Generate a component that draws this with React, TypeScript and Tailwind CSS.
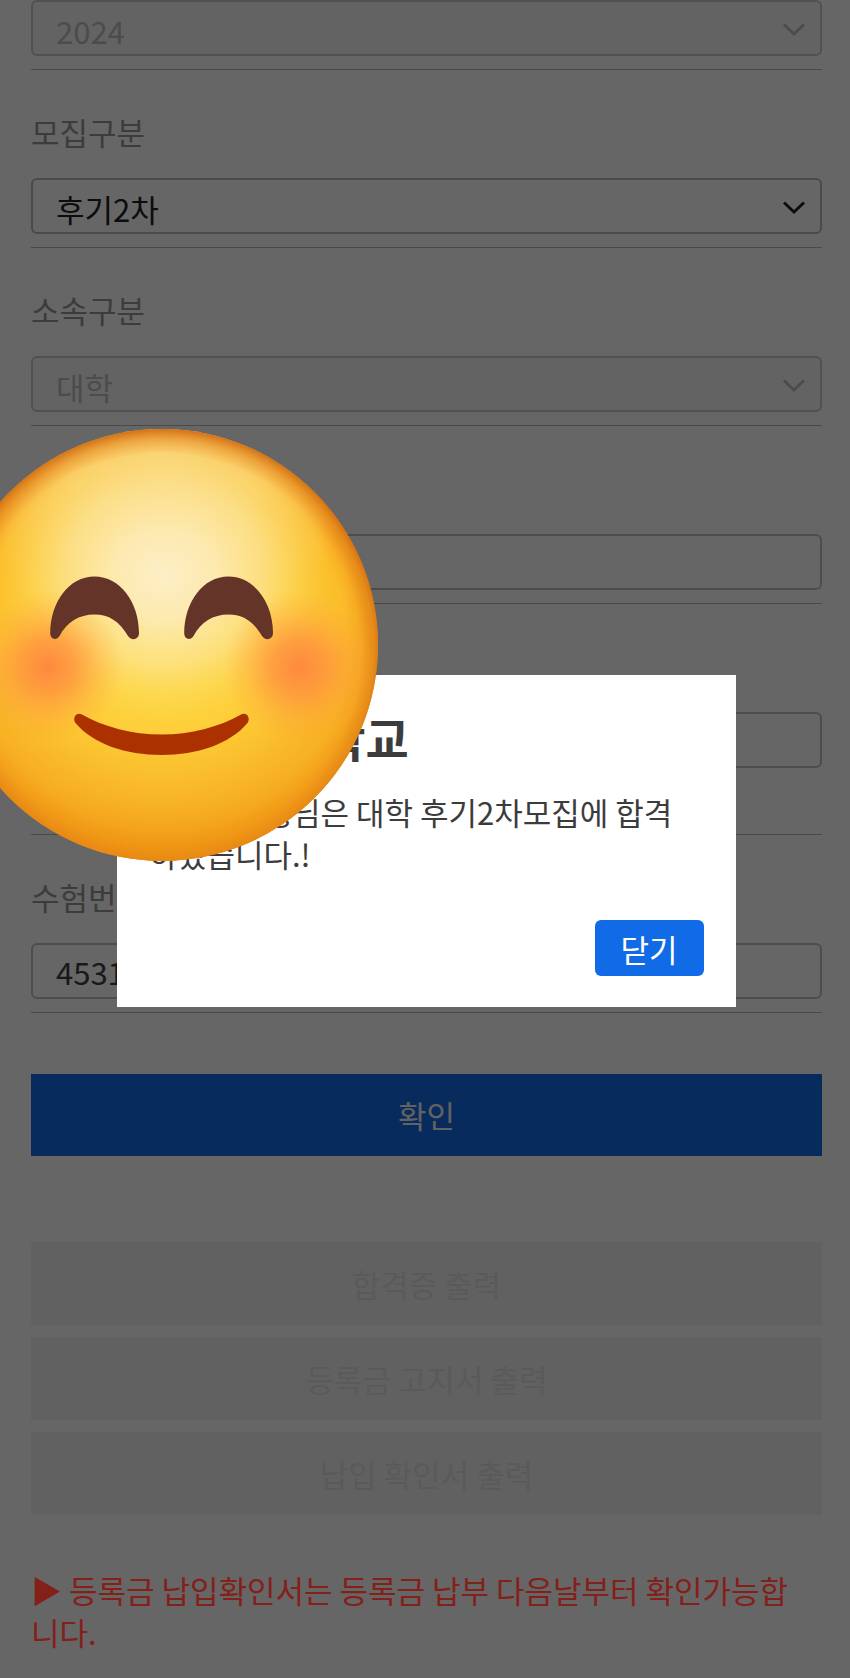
import type { ReactNode } from "react";

const controlBase =
  "block h-14 w-full rounded-md border-2 px-[23px] text-[31px] leading-[44px]";

function Field({
  id,
  label,
  hint = false,
  children,
}: {
  id: string;
  label?: string;
  hint?: boolean;
  children: ReactNode;
}) {
  return (
    <div className="border-b border-[#b8b8b8] pb-[13px]">
      {label && (
        <label
          htmlFor={id}
          className="mt-10 mb-6 block leading-[44px] text-[#969696]"
        >
          {label}
        </label>
      )}
      {children}
      {hint && <div className="h-[53px]" />}
    </div>
  );
}

function SelectBox({
  id,
  value,
  disabled = false,
  ariaLabel,
}: {
  id: string;
  value: string;
  disabled?: boolean;
  ariaLabel?: string;
}) {
  return (
    <div className="relative">
      <select
        id={id}
        aria-label={ariaLabel}
        disabled={disabled}
        defaultValue={value}
        className={`${controlBase} appearance-none pt-1.5 ${
          disabled
            ? "border-[#cacaca] bg-[#f8f8f8] text-[#bdbdbd] opacity-100"
            : "border-[#b8b8b8] bg-white text-[#222222]"
        }`}
      >
        <option>{value}</option>
      </select>
      <svg
        viewBox="0 0 24 14"
        aria-hidden="true"
        className={`pointer-events-none absolute top-[23px] right-4 h-[14px] w-6 ${
          disabled ? "text-[#bdbdbd]" : "text-[#222222]"
        }`}
        fill="none"
        stroke="currentColor"
        strokeWidth="3"
      >
        <path d="M2 1.5 L12 11 L22 1.5" />
      </svg>
    </div>
  );
}

function TextBox({ id, value = "" }: { id: string; value?: string }) {
  return (
    <input
      id={id}
      type="text"
      defaultValue={value}
      className={`${controlBase} border-[#c0c0c0] bg-white text-[#404040]`}
    />
  );
}

function SmilingFace() {
  return (
    <svg
      viewBox="0 0 432 432"
      aria-hidden="true"
      className="pointer-events-none absolute -top-[246px] -left-[171px] size-[432px]"
    >
      <defs>
        <radialGradient id="face" gradientUnits="userSpaceOnUse" cx="216" cy="216" r="216">
          <stop offset="0" stopColor="#fdd946" />
          <stop offset="0.6" stopColor="#fdcb35" />
          <stop offset="0.86" stopColor="#fbbd2a" />
          <stop offset="0.93" stopColor="#f6a823" />
          <stop offset="0.98" stopColor="#e58c16" />
          <stop offset="1" stopColor="#d9750f" />
        </radialGradient>
        <radialGradient id="shade" gradientUnits="userSpaceOnUse" cx="216" cy="110" r="326">
          <stop offset="0.58" stopColor="#f29a14" stopOpacity="0" />
          <stop offset="0.8" stopColor="#f29d17" stopOpacity="0.4" />
          <stop offset="1" stopColor="#ec8c10" stopOpacity="0.9" />
        </radialGradient>
        <radialGradient
          id="glow"
          gradientUnits="userSpaceOnUse"
          cx="0"
          cy="0"
          r="1"
          gradientTransform="translate(218 146) scale(168 150)"
        >
          <stop offset="0" stopColor="#fdeec6" />
          <stop offset="0.3" stopColor="#fdecb8" stopOpacity="0.9" />
          <stop offset="0.6" stopColor="#fde698" stopOpacity="0.65" />
          <stop offset="0.82" stopColor="#fde070" stopOpacity="0.28" />
          <stop offset="1" stopColor="#fdd84d" stopOpacity="0" />
        </radialGradient>
        <radialGradient id="sheen" gradientUnits="userSpaceOnUse" cx="216" cy="36" r="190">
          <stop offset="0" stopColor="#f9d488" stopOpacity="0.85" />
          <stop offset="0.5" stopColor="#f9d78a" stopOpacity="0.6" />
          <stop offset="1" stopColor="#fad780" stopOpacity="0" />
        </radialGradient>
        <radialGradient id="rim" gradientUnits="userSpaceOnUse" cx="216" cy="223" r="223">
          <stop offset="0.89" stopColor="#e88a1c" stopOpacity="0" />
          <stop offset="0.95" stopColor="#e5881c" stopOpacity="0.5" />
          <stop offset="1" stopColor="#cf6a0e" stopOpacity="0.9" />
        </radialGradient>
        <radialGradient id="cheek">
          <stop offset="0" stopColor="#ff883f" />
          <stop offset="0.35" stopColor="#ff9040" stopOpacity="0.75" />
          <stop offset="0.7" stopColor="#ff9a40" stopOpacity="0.3" />
          <stop offset="1" stopColor="#ffa640" stopOpacity="0" />
        </radialGradient>
      </defs>
      <circle cx="216" cy="216" r="216" fill="url(#face)" />
      <circle cx="216" cy="216" r="216" fill="url(#shade)" />
      <circle cx="216" cy="216" r="216" fill="url(#sheen)" />
      <circle cx="216" cy="216" r="216" fill="url(#glow)" />
      <circle cx="216" cy="216" r="216" fill="url(#rim)" />
      <circle cx="102" cy="238" r="76" fill="url(#cheek)" />
      <circle cx="353" cy="238" r="76" fill="url(#cheek)" />
      <g fill="#653428">
        <path id="eye" d="M104.200 204 C104.500 173 123 147.500 148.500 147.500 C174 147.500 193 173 193 204 C193 211 185 212 182 207 C173 192 163 185.500 148.500 185.500 C133 185.500 121 193 113.500 207 C110.500 212 104.200 210.500 104.200 204 Z" />
        <use href="#eye" x="134" />
      </g>
      <path
        d="M136 285.500 C158 298 186 305.500 215.500 305.500 C245 305.500 273 298 295 285.500 C300.500 282.500 305 289 301.500 294 C284 315 251 326 215.500 326 C180 326 147 315 129.500 294 C126 289 130.500 282.500 136 285.500 Z"
        fill="#ab3200"
      />
    </svg>
  );
}

const documents = ["합격증 출력", "등록금 고지서 출력", "납입 확인서 출력"];

export default function App() {
  return (
    <div className="relative min-h-screen overflow-hidden bg-white font-['Noto_Sans_CJK_KR',sans-serif] text-[31px] leading-[42px]">
      <form className="pr-7 pb-5 pl-[31px]" onSubmit={(e) => e.preventDefault()}>
        <Field id="year">
          <SelectBox id="year" value="2024" ariaLabel="학년도" disabled />
        </Field>
        <Field id="round" label="모집구분">
          <SelectBox id="round" value="후기2차" />
        </Field>
        <Field id="division" label="소속구분">
          <SelectBox id="division" value="대학" disabled />
        </Field>
        <Field id="applicant" label="성명">
          <TextBox id="applicant" />
        </Field>
        <Field id="birth" label="생년월일" hint>
          <TextBox id="birth" />
        </Field>
        <Field id="number" label="수험번호">
          <TextBox id="number" value="4531" />
        </Field>

        <button
          type="submit"
          className="mt-[61px] block h-[82px] w-full bg-[#116be6] text-[#f4f4f4]"
        >
          확인
        </button>

        <div className="mt-[86px] flex flex-col gap-3">
          {documents.map((name) => (
            <button
              key={name}
              type="button"
              disabled
              className="h-[83px] w-full bg-[#f2f2f2] text-[#e2e2e2]"
            >
              {name}
            </button>
          ))}
        </div>

        <p className="relative z-10 mt-[54px] pr-4 text-[#84201a]">
          ▶ 등록금 납입확인서는 등록금 납부 다음날부터 확인가능합니다.
        </p>
      </form>

      <div className="absolute inset-0 flex items-center justify-center bg-black/60 pt-1 pl-[3px]">
        <section
          role="dialog"
          aria-modal="true"
          aria-labelledby="result-title"
          className="relative w-[73%] bg-white px-8 pt-[30px] pb-[31px] text-[#3c3c3c]"
        >
          <h1 id="result-title" className="text-[47px] leading-[64px] font-bold">
            가나다대학교
          </h1>
          <p className="mt-[22px] pr-4">
            홍길동학생님은 대학 후기2차모집에 합격하였습니다.!
          </p>
          <div className="mt-[45px] flex justify-end">
            <button
              type="button"
              className="h-14 rounded-md bg-[#116be6] px-[26px] pt-0.5 text-white"
            >
              닫기
            </button>
          </div>
          <SmilingFace />
        </section>
      </div>
    </div>
  );
}
